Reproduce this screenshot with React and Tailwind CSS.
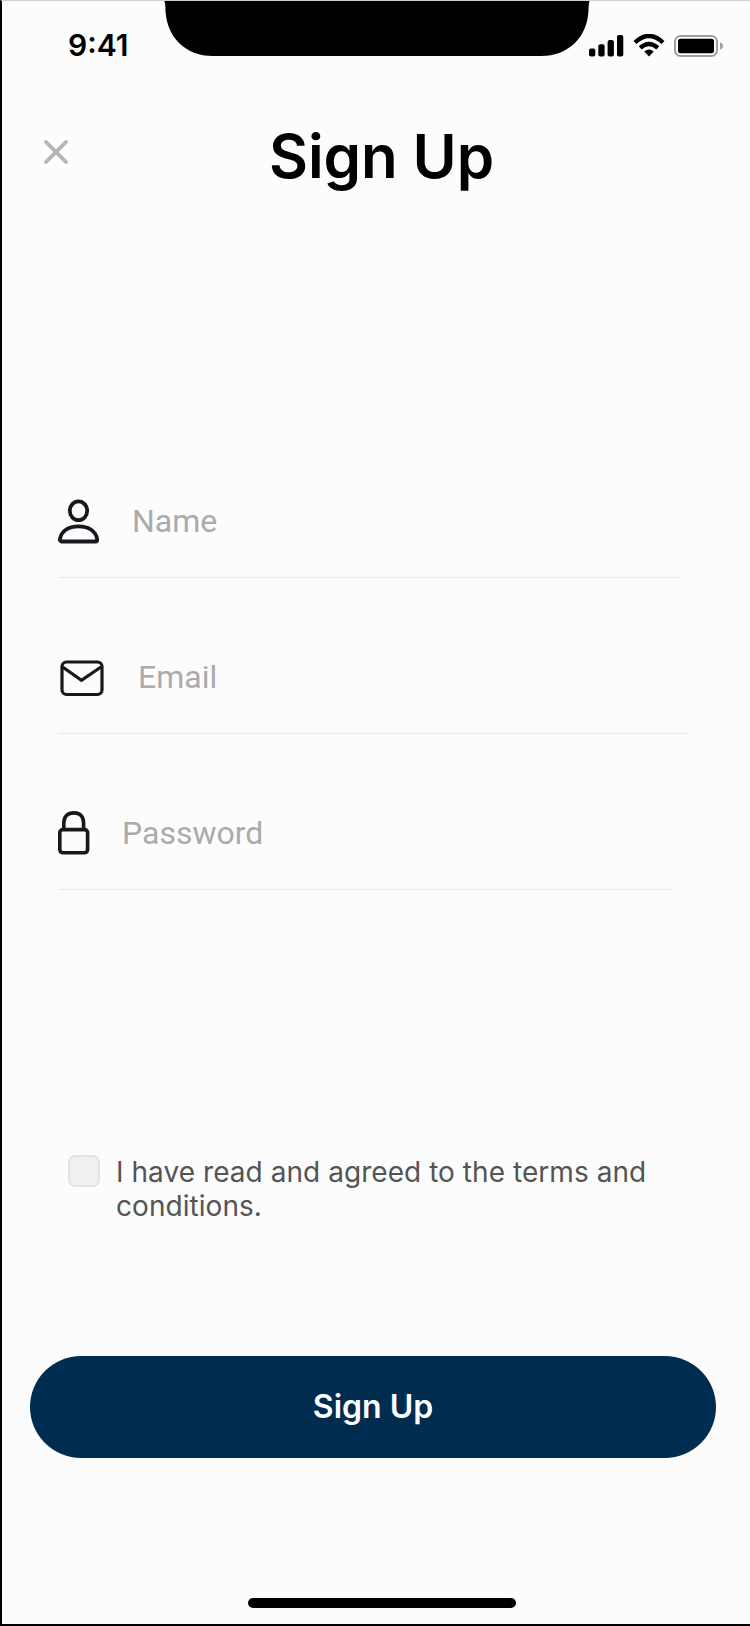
const inter = "font-['Inter','Liberation_Sans',sans-serif]";

function StatusBar() {
  return (
    <header className="relative h-[94px] shrink-0">
      <svg className="absolute left-[161px] -top-px" width="428" height="56" viewBox="0 0 428 56" aria-hidden="true">
        <path d="M1 0Q2.500 3 2.500 11C4 37 22 56 50 56H378C406 56 424 37 425.500 11Q425.500 3 427 0Z" fill="#000" />
      </svg>
      <div className="flex items-start justify-between pl-[66px] pr-[27px] pt-[26px]">
        <time className="text-[30px] leading-9 font-semibold">9:41</time>
        <div className="flex items-start pt-[7px]">
          <svg width="36" height="24" viewBox="0 0 36 24" fill="#000" aria-label="Signal">
            <rect x="0" y="14.5" width="6.3" height="8" rx="2" />
            <rect x="9.3" y="10.3" width="6.3" height="12.2" rx="2" />
            <rect x="18.6" y="6" width="6.3" height="16.5" rx="2" />
            <rect x="28" y="1" width="6.3" height="21.5" rx="2" />
          </svg>
          <svg className="ml-[8px]" width="32" height="24" viewBox="0 0 32 24" aria-label="Wi-Fi">
            <path d="M2 8.500Q16-4.500 30 8.500" fill="none" stroke="#000" strokeWidth="4.4" />
            <path d="M7.2 13.9Q16 6 24.8 13.9" fill="none" stroke="#000" strokeWidth="4.4" />
            <path d="M11.3 17.4Q16 13.4 20.7 17.4L16 22.4Z" fill="#000" />
          </svg>
          <svg className="ml-[9px]" width="49" height="24" viewBox="0 0 49 24" aria-label="Battery">
            <rect x="1" y="2" width="42" height="20" rx="5.5" fill="none" stroke="#a0a0a3" strokeWidth="2" />
            <rect x="4" y="4.8" width="36" height="14.5" rx="2.5" fill="#000" />
            <path d="M46 8.500Q49 9.500 49 12T46 15.500Z" fill="#a0a0a3" />
          </svg>
        </div>
      </div>
    </header>
  );
}

function PersonIcon() {
  return (
    <svg className="block" width="42" height="46" viewBox="0 0 42 46" fill="none" stroke="#17171d" strokeWidth="3.8" aria-hidden="true">
      <ellipse cx="20.5" cy="12.8" rx="8.7" ry="9.4" />
      <path d="M3.6 43.500C2.400 43.500 1.900 42.700 1.900 41.500C3 33 10.500 28.400 20.500 28.400S38 33 39.200 41.500C39.200 42.700 38.700 43.500 37.500 43.500Z" />
    </svg>
  );
}

function MailIcon() {
  return (
    <svg className="block" width="44" height="37" viewBox="0 0 44 37" fill="none" stroke="#17171d" strokeWidth="3.2" aria-hidden="true">
      <rect x="2" y="2" width="40" height="32.5" rx="4.5" />
      <path d="M2.600 7L21.500 20.200L41 7" />
    </svg>
  );
}

function LockIcon() {
  return (
    <svg className="block" width="32" height="44" viewBox="0 0 32 44" fill="none" stroke="#17171d" strokeWidth="3.6" aria-hidden="true">
      <rect x="1.8" y="18.6" width="27.8" height="23.2" rx="3.2" />
      <path d="M5.800 18V12C5.800 5.600 9.600 1.900 15.800 1.900S25.600 5.600 25.600 12V18" />
    </svg>
  );
}

function Field({ icon, label, className, iconClass, labelClass }) {
  return (
    <div className={`flex items-start border-b border-[#e8e8e6] ${className}`}>
      <div className={iconClass}>{icon}</div>
      <label className={`font-['Roboto','Liberation_Sans',sans-serif] text-[32px] leading-[38px] text-[#ababad] ${labelClass}`}>
        {label}
      </label>
    </div>
  );
}

export default function App() {
  return (
    <main className={`flex h-[1626px] w-[750px] flex-col overflow-hidden border-b-2 border-l-2 border-t border-b-black border-l-black border-t-[#d0d0d0] bg-[#fcfcfc] text-black ${inter}`}>
      <StatusBar />

      <div className="flex h-[130px] shrink-0 items-start">
        <button className="ml-[42px] mt-[45px]" aria-label="Close">
          <svg className="block" width="24" height="24" viewBox="0 0 24 24" stroke="#b4b4b2" strokeWidth="3.8" strokeLinecap="round">
            <path d="M2 2L22 22M22 2L2 22" />
          </svg>
        </button>
        <h1 className="ml-[201px] mt-[25px] whitespace-nowrap text-[60px] leading-[72px] font-semibold tracking-[-0.1px]">Sign Up</h1>
      </div>

      <form className="ml-[56px] mt-[273px] flex flex-col">
        <Field icon={<PersonIcon />} label="Name" className="h-[80px] w-[622px]" iconClass="w-[74px]" labelClass="pt-[4px]" />
        <Field icon={<MailIcon />} label="Email" className="mt-[76px] h-[80px] w-[629px]" iconClass="w-[80px] pl-[2px] pt-[6px]" labelClass="pt-[4px]" />
        <Field icon={<LockIcon />} label="Password" className="mt-[76px] h-[80px] w-[613px]" iconClass="w-[64px] pt-[1px]" labelClass="pt-[4px]" />
      </form>

      <div className="ml-[66px] mt-[265px] flex items-start">
        <span role="checkbox" aria-checked="false" className="h-8 w-8 rounded-[7px] border-2 border-[#e2e2e0] bg-[#f0f0ee]" />
        <p className="ml-[16px] w-[580px] text-[28px] leading-[34px] tracking-[0.05px] text-[#545454]">
          I have read and agreed to the terms and
          <br />
          conditions.
        </p>
      </div>

      <button className="ml-[28px] mt-[133px] h-[102px] w-[686px] shrink-0 rounded-full bg-[#002c50] text-[32px] font-semibold text-white">
        Sign Up
      </button>

      <div className="ml-[246px] mt-[140px] h-[10px] w-[268px] shrink-0 rounded-full bg-black" />
    </main>
  );
}
